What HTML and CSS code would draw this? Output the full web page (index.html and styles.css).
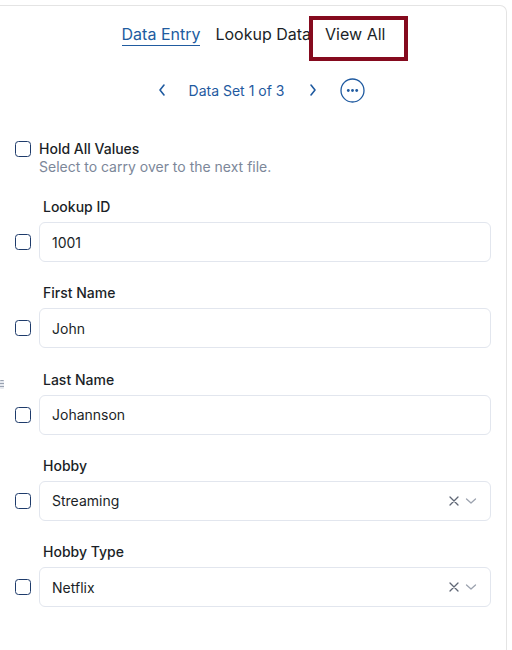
FILE: index.html
```html
<!DOCTYPE html>
<html>
<head>
<meta charset="utf-8">
<link rel="stylesheet" href="styles.css">
</head>
<body>
<div class="panel">
  <div class="tabs">
    <span class="tab active">Data Entry</span>
    <span class="tab">Lookup Data</span>
    <span class="tab boxed">View All</span>
  </div>
  <div class="pager">
    <svg class="chev" width="10" height="14" viewBox="0 0 10 14"><path d="M7 2 L3 7 L7 12" fill="none" stroke="#1f5aa0" stroke-width="1.6" stroke-linecap="round" stroke-linejoin="round"/></svg>
    <span class="set">Data Set 1 of 3</span>
    <svg class="chev" width="10" height="14" viewBox="0 0 10 14"><path d="M3 2 L7 7 L3 12" fill="none" stroke="#1f5aa0" stroke-width="1.6" stroke-linecap="round" stroke-linejoin="round"/></svg>
    <svg class="more" width="25" height="25" viewBox="0 0 25 25"><circle cx="12.5" cy="12.5" r="11.5" fill="none" stroke="#1f5aa0" stroke-width="1.3"/><circle cx="8.3" cy="12.5" r="1.4" fill="#1f5aa0"/><circle cx="12.5" cy="12.5" r="1.4" fill="#1f5aa0"/><circle cx="16.7" cy="12.5" r="1.4" fill="#1f5aa0"/></svg>
  </div>
  <div class="hold">
    <span class="cb"></span>
    <div>
      <div class="hold-title">Hold All Values</div>
      <div class="hold-sub">Select to carry over to the next file.</div>
    </div>
  </div>
  <div class="field">
    <div class="label">Lookup ID</div>
    <div class="row"><span class="cb"></span><div class="input">1001</div></div>
  </div>
  <div class="field">
    <div class="label">First Name</div>
    <div class="row"><span class="cb"></span><div class="input">John</div></div>
  </div>
  <div class="field">
    <span class="handle"></span>
    <div class="label">Last Name</div>
    <div class="row"><span class="cb"></span><div class="input">Johannson</div></div>
  </div>
  <div class="field">
    <div class="label">Hobby</div>
    <div class="row"><span class="cb"></span><div class="input select"><span>Streaming</span><span class="icons"><svg width="10" height="10" viewBox="0 0 10 10"><path d="M1 1 L9 9 M9 1 L1 9" stroke="#5f6675" stroke-width="1.3" stroke-linecap="round"/></svg><svg width="12" height="8" viewBox="0 0 12 8"><path d="M1.5 2 L6 6 L10.5 2" fill="none" stroke="#9ca3af" stroke-width="1.3" stroke-linecap="round" stroke-linejoin="round"/></svg></span></div></div>
  </div>
  <div class="field">
    <div class="label">Hobby Type</div>
    <div class="row"><span class="cb"></span><div class="input select"><span>Netflix</span><span class="icons"><svg width="10" height="10" viewBox="0 0 10 10"><path d="M1 1 L9 9 M9 1 L1 9" stroke="#5f6675" stroke-width="1.3" stroke-linecap="round"/></svg><svg width="12" height="8" viewBox="0 0 12 8"><path d="M1.5 2 L6 6 L10.5 2" fill="none" stroke="#9ca3af" stroke-width="1.3" stroke-linecap="round" stroke-linejoin="round"/></svg></span></div></div>
  </div>
</div>
</body>
</html>
```
FILE: styles.css
```css
html, body {
  margin: 0;
  padding: 0;
  background: #ffffff;
}
body {
  font-family: Inter, "Noto Sans", "Liberation Sans", sans-serif;
  color: #1b1f27;
}
.panel {
  margin-top: 5px;
  width: 507px;
  height: 660px;
  border-top: 1px solid #e4e4e4;
  border-right: 1px solid #e4e4e4;
  border-top-right-radius: 7px;
  box-sizing: border-box;
}
.tabs {
  display: flex;
  justify-content: center;
  align-items: flex-start;
  margin-top: 10px;
  padding-left: 24px;
  height: 45px;
}
.tab {
  font-size: 16px;
  line-height: 20px;
  margin-top: 8px;
}
.tab.active {
  color: #215ca0;
  border-bottom: 1.5px solid #215ca0;
  padding-bottom: 1px;
  margin-right: 15px;
}
.tab.boxed {
  margin-top: 0;
  margin-left: -2px;
  border: 4px solid #850a1e;
  padding: 4px 19px 13px 12px;
}
.pager {
  display: flex;
  align-items: center;
  justify-content: center;
  margin-top: 16px;
  padding-left: 16px;
  height: 26px;
  color: #1f5aa0;
}
.set {
  font-size: 14px;
  margin: 0 24px 0 22px;
}
.more {
  margin-left: 22px;
}
.cb {
  display: inline-block;
  width: 14px;
  height: 14px;
  border: 1.5px solid #1e3b6b;
  border-radius: 3.5px;
  flex: none;
}
.hold {
  display: flex;
  gap: 8px;
  margin-top: 37px;
  padding-left: 15px;
}
.hold .cb {
  margin-top: 1px;
}
.hold-title {
  font-size: 14px;
  font-weight: 500;
  line-height: 18px;
  color: #1b1f27;
}
.hold-sub {
  font-size: 14px;
  color: #7c8799;
  line-height: 18px;
}
.field {
  position: relative;
  margin-top: 22px;
  padding-left: 15px;
}
.field + .field {
  margin-top: 22.3px;
}
.label {
  font-size: 14px;
  font-weight: 500;
  line-height: 18px;
  padding-left: 28px;
  margin-bottom: 6px;
}
.row {
  display: flex;
  align-items: center;
  gap: 8px;
}
.input {
  flex: none;
  width: 452px;
  height: 40px;
  box-sizing: border-box;
  border: 1px solid #e2e6ee;
  border-radius: 6px;
  padding: 0 12px;
  display: flex;
  align-items: center;
  font-size: 14px;
  color: #1b1f27;
}
.select {
  justify-content: space-between;
}
.icons {
  display: flex;
  align-items: center;
  gap: 6px;
  margin-right: 1px;
}
.handle {
  position: absolute;
  left: 0;
  top: 9px;
  width: 4px;
  height: 9px;
  background: repeating-linear-gradient(#9aa3b2 0 1.5px, #e6e9ef 1.5px 3px);
  border-radius: 1px;
}
```
